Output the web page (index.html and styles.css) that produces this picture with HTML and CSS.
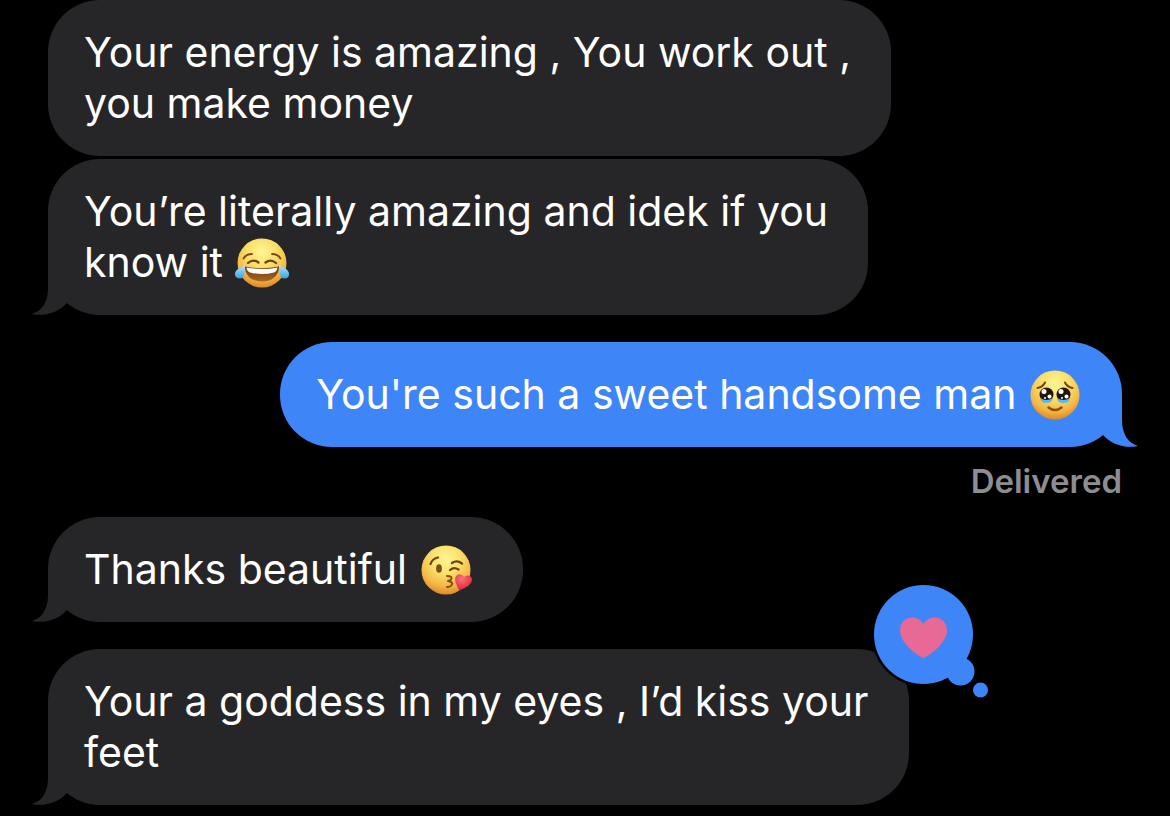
FILE: index.html
```html
<!DOCTYPE html>
<html lang="en">
<head>
<meta charset="utf-8">
<meta name="viewport" content="width=device-width, initial-scale=1">
<title>Messages</title>
<link rel="stylesheet" href="styles.css">
</head>
<body>
<svg class="defs" width="0" height="0" aria-hidden="true">
  <defs>
    <radialGradient id="face" cx="50%" cy="28%" r="74%">
      <stop offset="0" stop-color="#fff596"/>
      <stop offset=".4" stop-color="#fbe06a"/>
      <stop offset=".75" stop-color="#f3b744"/>
      <stop offset="1" stop-color="#d98426"/>
    </radialGradient>
    <linearGradient id="tear" x1="0" y1="0" x2="0" y2="1">
      <stop offset="0" stop-color="#b4e8fb"/>
      <stop offset="1" stop-color="#36a2e6"/>
    </linearGradient>
    <linearGradient id="mouth" x1="0" y1="0" x2="0" y2="1">
      <stop offset="0" stop-color="#6b360e"/>
      <stop offset="1" stop-color="#a96a20"/>
    </linearGradient>
    <radialGradient id="kiss" cx="40%" cy="30%" r="70%">
      <stop offset="0" stop-color="#ff707c"/>
      <stop offset="1" stop-color="#dc2639"/>
    </radialGradient>
    <path id="tail-shape" d="M16 0V25C16 39 10 48 0 51C13 54 27 49 35 40L48 28V0Z"/>
  </defs>
</svg>
<main class="thread">
  <section class="group">
    <p class="bubble received">Your energy is amazing , You work out ,<br>you make money</p>
    <p class="bubble received">You’re literally amazing and idek if you<br>know it
      <svg class="emoji" viewBox="0 0 54 50" role="img" aria-label="Face with tears of joy">
        <circle cx="27" cy="25" r="24.5" fill="url(#face)"/>
        <path d="M8.500 20.500Q11 16 17 16M37 16Q43 16 45.500 20.500" fill="none" stroke="#7b4710" stroke-width="1.8" stroke-linecap="round"/>
        <path d="M13 25Q18 20.500 23.500 24.500M30.500 24.500Q36 20.500 41 25" fill="none" stroke="#70400e" stroke-width="2.200" stroke-linecap="round"/>
        <path d="M10 28.500Q27 32 44 28.500C44 39 36 43.500 27 43.500S10 39 10 28.500Z" fill="url(#mouth)"/>
        <path d="M11.500 29.500Q27 32.500 42.500 29.500Q42 33.500 39 34.500Q27 37.500 15 34.500Q12 33.500 11.500 29.500Z" fill="#fff"/>
        <path d="M10 27C10 33 10 40.500 4.500 40.500C-1 40.500 -1.500 34 3 31Q8 29 10 27Z" fill="url(#tear)"/>
        <path d="M44 27C44 33 44 40.500 49.500 40.500C55 40.500 55.500 34 51 31Q46 29 44 27Z" fill="url(#tear)"/>
      </svg></p>
    <svg class="tail" viewBox="0 0 48 52" aria-hidden="true"><use href="#tail-shape"/></svg>
  </section>

  <section class="group sent-group">
    <p class="bubble sent">You're such a sweet handsome man
      <svg class="emoji" viewBox="0 0 54 50" role="img" aria-label="Face holding back tears">
        <circle cx="27" cy="25" r="24.500" fill="url(#face)"/>
        <path d="M9.500 18Q15 17 17 12.500M37 12.500Q39 17 44.500 18" fill="none" stroke="#754510" stroke-width="2" stroke-linecap="round"/>
        <circle cx="18.500" cy="24.500" r="7" fill="#25140d"/>
        <circle cx="35.500" cy="24.500" r="7" fill="#25140d"/>
        <path d="M12 28Q18.500 32 25 28Q24 33 18.500 33T12 28ZM29 28Q35.500 32 42 28Q41.500 33 35.500 33T29 28Z" fill="#55bdea"/>
        <g fill="#fff"><circle cx="16" cy="21.500" r="2.500"/><circle cx="33" cy="21.500" r="2.500"/><circle cx="21.500" cy="26.500" r="2"/><circle cx="38.500" cy="26.500" r="2"/><circle cx="17" cy="28" r="1"/><circle cx="34" cy="28" r="1"/></g>
        <path d="M20.500 37.500Q27 42.500 33.500 37.500" fill="none" stroke="#8c4e0d" stroke-width="2.500" stroke-linecap="round"/>
      </svg></p>
    <svg class="tail" viewBox="0 0 48 52" aria-hidden="true"><use href="#tail-shape"/></svg>
  </section>
  <p class="status">Delivered</p>

  <section class="group">
    <p class="bubble received short">Thanks beautiful
      <svg class="emoji" viewBox="0 0 54 50" role="img" aria-label="Face blowing a kiss">
        <circle cx="27" cy="25" r="24.500" fill="url(#face)"/>
        <path d="M11.500 19Q13 14 19 12.500M33 18Q38 14.500 43 18.500M31 25Q35 21.500 39.500 24.500" fill="none" stroke="#70430f" stroke-width="2.300" stroke-linecap="round"/>
        <ellipse cx="20" cy="23.500" rx="2.900" ry="4.300" fill="#765018"/>
        <path d="M28 31Q33 31 32.500 33.500Q32 35.500 29 36Q34 37 33 39.500Q32 42 28 42" fill="none" stroke="#8b4b12" stroke-width="2" stroke-linecap="round" stroke-linejoin="round"/>
        <path d="M40 45C38 41 34 34 37.500 30.500Q42 27.500 45 32Q51 28.500 53 33.500C54 39 46 44 40 45Z" fill="url(#kiss)"/>
      </svg></p>
    <svg class="tail" viewBox="0 0 48 52" aria-hidden="true"><use href="#tail-shape"/></svg>
  </section>

  <section class="group">
    <p class="bubble received">Your a goddess in my eyes , I’d kiss your<br>feet</p>
    <svg class="tail" viewBox="0 0 48 52" aria-hidden="true"><use href="#tail-shape"/></svg>
    <svg class="reaction" viewBox="0 0 120 118" role="img" aria-label="Loved">
      <circle cx="52.500" cy="52.500" r="52" fill="#000"/>
      <g fill="#3e86f7"><circle cx="52.500" cy="52.500" r="49.500"/><circle cx="89.500" cy="89.500" r="14"/><circle cx="109.500" cy="108" r="7.500"/></g>
      <path d="M52.500 76C49 75 29 62 29 48.500C29 34.500 46 31 52.500 42C59 31 76 34.500 76 48.500C76 62 56 75 52.500 76Z" fill="#e96996"/>
    </svg>
  </section>
</main>
</body>
</html>
```
FILE: styles.css
```css
body {
  margin: 0;
  background: #000;
  color: #fff;
  font-family: Inter, "Noto Sans", sans-serif;
  font-size: 41px;
  line-height: 51px;
}

.defs {
  position: absolute;
}

.thread {
  display: flex;
  flex-direction: column;
  align-items: flex-start;
  gap: 27px;
  padding: 0 48px 11px;
}

.group {
  position: relative;
  display: flex;
  flex-direction: column;
  align-items: flex-start;
  gap: 3px;
}

.sent-group {
  align-self: flex-end;
}

.bubble {
  margin: 0;
  padding: 27px 40px 27px 36px;
  border-radius: 52px;
}

.received {
  background: #262628;
}

.short {
  padding-right: 50px;
}

.sent {
  background: #3e86f7;
}

.emoji {
  width: 54px;
  height: 50px;
  vertical-align: -11px;
}

.tail {
  position: absolute;
  bottom: 0;
  left: -16px;
  width: 48px;
  height: 52px;
  fill: #262628;
}

.sent-group .tail {
  right: -16px;
  left: auto;
  fill: #3e86f7;
  transform: scaleX(-1);
}

.status {
  align-self: flex-end;
  margin: -13px 0 -11px;
  color: #8d8d92;
  font-size: 33px;
  font-weight: 600;
  line-height: 40px;
}

.reaction {
  position: absolute;
  top: -67px;
  right: -82px;
  width: 120px;
  height: 118px;
}
```
